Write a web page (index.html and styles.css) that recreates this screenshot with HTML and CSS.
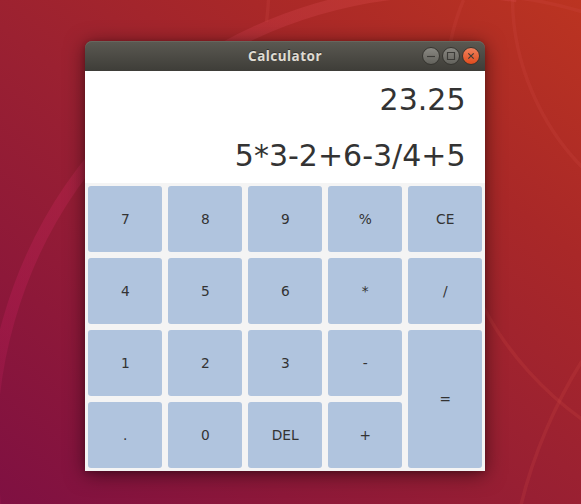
FILE: index.html
```
<!DOCTYPE html>
<html lang="en">
<head>
<meta charset="utf-8">
<title>Calculator</title>
<link rel="stylesheet" href="styles.css">
</head>
<body>
<svg class="wallpaper" viewBox="0 0 581 504" aria-hidden="true">
  <defs>
    <linearGradient id="ring" gradientUnits="userSpaceOnUse" x1="0" y1="480" x2="380" y2="0">
      <stop offset="0" stop-color="#b01c55" stop-opacity=".2"/>
      <stop offset=".25" stop-color="#b01c50" stop-opacity=".5"/>
      <stop offset=".6" stop-color="#b82a48" stop-opacity=".5"/>
      <stop offset="1" stop-color="#d04442" stop-opacity=".4"/>
    </linearGradient>
  </defs>
  <path class="ring" d="M-2.400 520A454 454 0 0 1 517 -3.600"/>
  <g class="arcs">
    <path d="M268.500 0Q268 10 266.500 22"/>
    <path d="M463.500 0Q455 20 450.500 42"/>
    <path d="M512.500 0C513 65 542 127 583 168"/>
    <path d="M519 -2Q550 2 583 12"/>
    <path d="M484 308C508 354 545 393 583 420"/>
    <path d="M582 361C556 402 533 455 521 505"/>
  </g>
</svg>
<main class="window">
  <header class="titlebar">
    <h1 class="title">Calculator</h1>
    <div class="controls">
      <svg class="control" viewBox="0 0 20 20"><circle class="face gray" cx="10" cy="10" r="8.500"/><path class="glyph" d="M6 10.500h8"/></svg>
      <svg class="control" viewBox="0 0 20 20"><circle class="face gray" cx="10" cy="10" r="8.500"/><path class="glyph" d="M6.500 6.500h7v7h-7z"/></svg>
      <svg class="control" viewBox="0 0 20 20">
        <defs>
          <linearGradient id="gray" x2="0" y2="1"><stop stop-color="#8b8983"/><stop offset="1" stop-color="#62615b"/></linearGradient>
          <linearGradient id="orange" x2="0" y2="1"><stop stop-color="#f1835f"/><stop offset="1" stop-color="#df4a1b"/></linearGradient>
        </defs>
        <circle class="face orange" cx="10" cy="10" r="8.500"/><path class="glyph" d="M7.300 7.300l5.400 5.400M12.700 7.300l-5.400 5.400"/>
      </svg>
    </div>
  </header>
  <section class="display">
    <output class="line">23.25</output>
    <output class="line">5*3-2+6-3/4+5</output>
  </section>
  <section class="keys">
    <button class="key">7</button>
    <button class="key">8</button>
    <button class="key">9</button>
    <button class="key">%</button>
    <button class="key">CE</button>
    <button class="key">4</button>
    <button class="key">5</button>
    <button class="key">6</button>
    <button class="key">*</button>
    <button class="key">/</button>
    <button class="key">1</button>
    <button class="key">2</button>
    <button class="key">3</button>
    <button class="key">-</button>
    <button class="key equals">=</button>
    <button class="key">.</button>
    <button class="key">0</button>
    <button class="key">DEL</button>
    <button class="key">+</button>
  </section>
</main>
</body>
</html>
```
FILE: styles.css
```
* { box-sizing: border-box; }

body {
  margin: 0;
  height: 504px;
  padding: 41px 96px 33px 85px;
  overflow: hidden;
  background: linear-gradient(38deg, #7f1042 0%, #8d1839 24%, #9b2131 50%, #a92828 73%, #bb3421 100%);
  font-family: "DejaVu Sans", sans-serif;
}

.wallpaper {
  position: absolute;
  inset: 0;
  width: 581px;
  height: 504px;
}

.ring { fill: none; stroke: url(#ring); stroke-width: 12; }
.arcs { fill: none; stroke: #d34a45; stroke-opacity: .2; stroke-width: 3.5; }

.window {
  position: relative;
  width: 400px;
  height: 430px;
  border-radius: 7px 7px 0 0;
  box-shadow: 0 3px 20px rgba(0, 0, 0, .5), 0 1px 5px rgba(0, 0, 0, .2);
}

.titlebar {
  display: grid;
  grid-template-columns: 1fr auto 1fr;
  align-items: center;
  height: 30px;
  padding-right: 4px;
  padding-left: 4px;
  border-radius: 7px 7px 0 0;
  background: linear-gradient(#5b5952, #3e3d38);
  box-shadow: inset 0 1px #68665e;
}

.title {
  grid-column: 2;
  margin: 0;
  color: #dfdbd2;
  font: bold 13.5px/20px "Noto Sans", "Open Sans", sans-serif;
  letter-spacing: .5px;
  text-shadow: 0 -1px #33322e;
}

.controls { display: flex; justify-content: flex-end; }
.control { display: block; width: 20px; height: 20px; }
.face { stroke: #35342f; stroke-width: 1; }
.gray { fill: url(#gray); }
.orange { fill: url(#orange); }
.glyph { fill: none; stroke: #3c3b37; stroke-width: 1.15; }

.display {
  display: grid;
  grid-template-rows: 56px 56px;
  padding-right: 19.5px;
  background: #fff;
}

.line {
  color: #333;
  font-size: 30px;
  line-height: 58px;
  text-align: right;
}

.keys {
  display: grid;
  grid-template-columns: repeat(5, 74px);
  grid-template-rows: repeat(4, 66px);
  gap: 6px;
  padding: 3px;
  background: #f4f4f4;
}

.key {
  margin: 0;
  padding: 0 0 0 .5px;
  border: 0;
  border-radius: 3px;
  background: #b0c4de;
  color: #333;
  font: 13.75px "DejaVu Sans", sans-serif;
}

.equals { grid-row: span 2; }
```
